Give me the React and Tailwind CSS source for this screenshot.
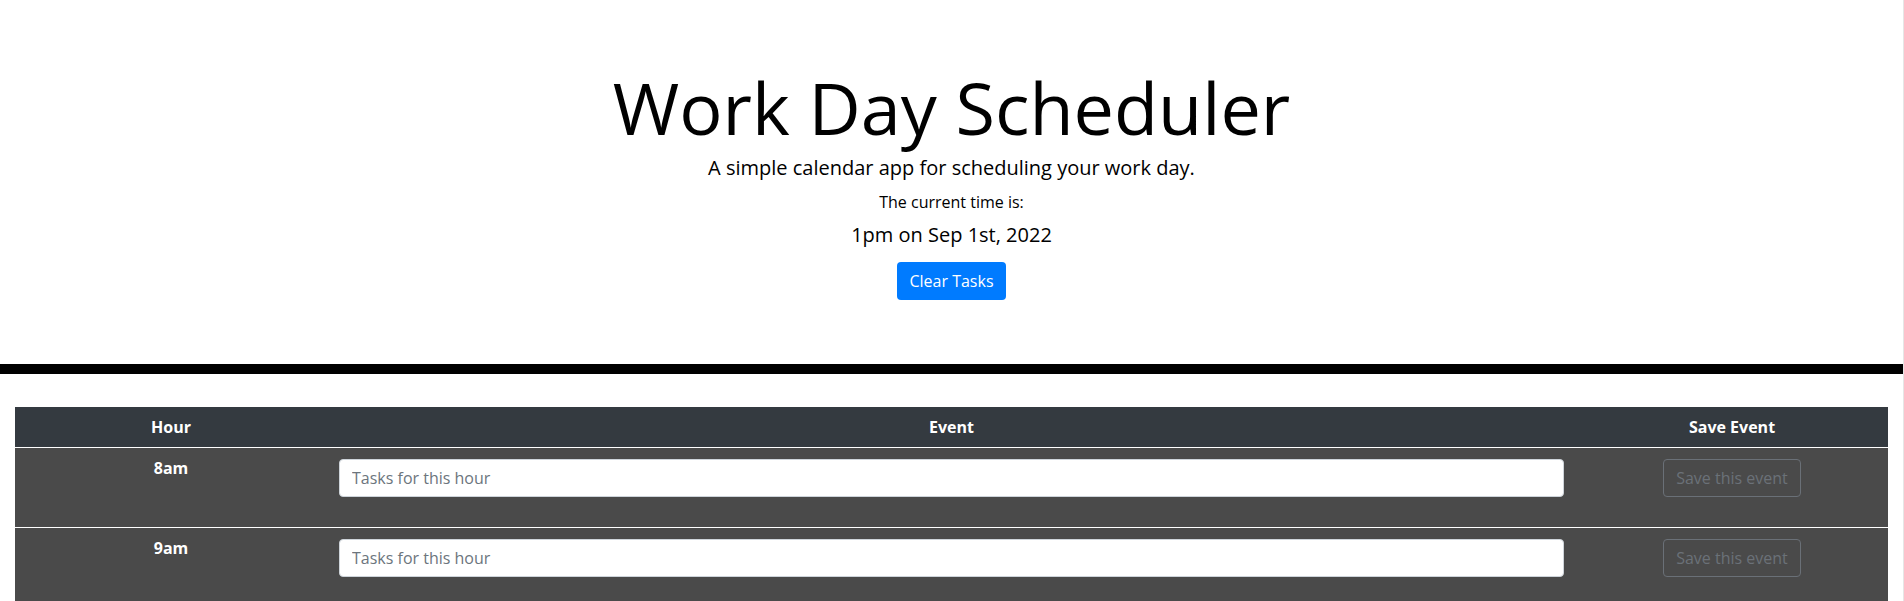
import React from 'react'

const hours = ['8am', '9am', '10am', '11am', '12pm', '1pm', '2pm', '3pm', '4pm', '5pm']

const HourRow = ({ label }) => {
  return (
    <div className="grid grid-cols-[312px_1fr_312px] border-t border-white bg-[#4a4a4a] h-[80px]">
      <div className="pt-[8px] text-center text-white font-bold text-[16px] leading-[24px]">{label}</div>
      <div className="px-[12px] pt-[11px]">
        <input
          type="text"
          placeholder="Tasks for this hour"
          className="w-full h-[38px] bg-white border border-[#ced4da] rounded-[4px] px-[12px] text-[16px] text-[#495057] placeholder:text-[#6c757d] outline-none"
        />
      </div>
      <div className="pt-[11px] flex justify-center items-start">
        <button className="h-[38px] w-[138px] border border-[#6a7077] rounded-[4px] text-[16px] text-[#6b7178] bg-transparent">
          Save this event
        </button>
      </div>
    </div>
  )
}

const App = () => {
  return (
    <div className="min-h-screen bg-white border-r border-[#e6e6e6] font-['Open_Sans',sans-serif] text-black">

      {/* Jumbotron */}
      <header className="pt-16 pb-16 text-center border-b-[10px] border-black">
        <h1 className="text-[72px] leading-[86px] font-normal">Work Day Scheduler</h1>
        <p className="mt-[3px] text-[20px] leading-[30px]">A simple calendar app for scheduling your work day.</p>
        <p className="mt-[7px] text-[16px] leading-[24px]">The current time is:</p>
        <p className="mt-[6px] text-[20px] leading-[30px]">1pm on Sep 1st, 2022</p>
        <button className="mt-[12px] h-[38px] px-[12px] rounded-[4px] bg-[#007bff] text-white text-[16px] leading-[24px]">
          Clear Tasks
        </button>
      </header>

      {/* Schedule */}
      <section className="mt-[33px] px-[15px]">
        <div className="grid grid-cols-[312px_1fr_312px] h-[40px] items-center bg-[#343a40] text-white font-bold text-[16px] leading-[24px] text-center">
          <div>Hour</div>
          <div>Event</div>
          <div>Save Event</div>
        </div>
        {hours.map((h) => (
          <HourRow key={h} label={h} />
        ))}
      </section>

    </div>
  )
}

export default App
